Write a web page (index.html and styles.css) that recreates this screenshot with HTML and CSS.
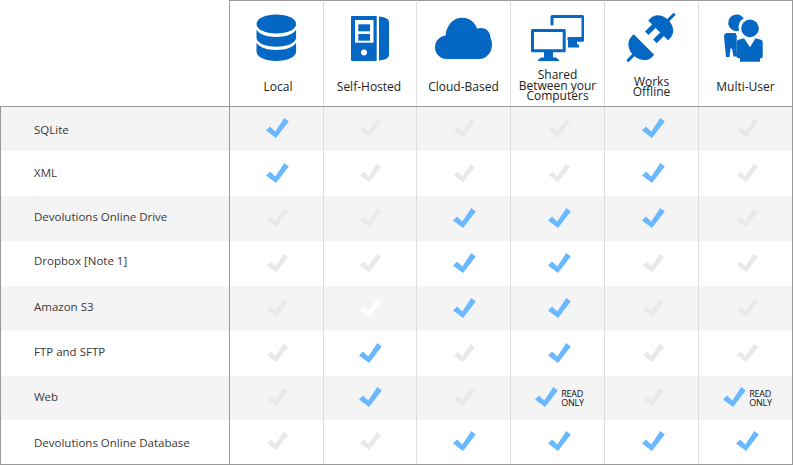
FILE: index.html
```html
<!DOCTYPE html>
<html lang="en">
<head>
<meta charset="utf-8">
<title>Data source comparison</title>
<link rel="stylesheet" href="styles.css">
</head>
<body>
<svg class="sprite" aria-hidden="true"><symbol id="check" viewBox="0 0 23 20"><polygon points="0,12.5 4,8.5 9.3,13.5 18.3,0 22.8,3.5 10,20"/></symbol></svg>
<div class="matrix">
  <div class="row head">
    <div class="name"></div>
    <div class="cell">
      <svg class="icon" viewBox="230 1 93 67"><g class="ink"><path d="M256.500 24c0-5.500 8.800-9.500 19.800-9.500s19.800 4 19.800 9.500-8.800 9.500-19.800 9.500-19.800-4-19.800-9.500z"/><path d="M256.500 29.500c2.500 4.800 10.500 7.500 19.800 7.500s17.300-2.700 19.800-7.500v8.300c0 5-8.800 9-19.800 9s-19.800-4-19.800-9z"/><path d="M256.500 42.500c2.500 4.800 10.500 7.500 19.800 7.500s17.300-2.700 19.800-7.500v9c0 5.400-8.800 9.500-19.800 9.500s-19.800-4.100-19.800-9.500z"/></g></svg>
      <div class="label nudge-right">Local</div>
    </div>
    <div class="cell">
      <svg class="icon" viewBox="324 1 92 67"><path class="ink" d="M352 16h24.700v45H352.500a1.500 1.500 0 0 1-1.500-1.500V17a1 1 0 0 1 1-1zM379 16.500c5 .5 10 2 10 5.500v33c0 3.500-5 5-10 5.500z"/><rect x="355" y="20" width="18.500" height="22.700" fill="#fff"/><rect class="ink" x="358.300" y="24.300" width="11.700" height="7"/><rect class="ink" x="358.300" y="34" width="11.700" height="6.700"/><circle cx="364" cy="52.500" r="3" fill="#fff"/></svg>
      <div class="label nudge-left">Self-Hosted</div>
    </div>
    <div class="cell">
      <svg class="icon" viewBox="417 1 93 67"><path class="ink" d="M447 59c-6.800 0-12-5.200-12-11.800 0-6.200 4.500-11 10.500-11.800 1-10 7.500-17.600 16.500-17.600 7.500 0 13 4.300 15 11 1.200-.5 2.600-.8 4-.8 5.500 0 9 4 9.500 9 0 .4-.100.600-.100.900 1 1.800 1.600 4 1.600 6.500 0 8-5.500 14.600-13 14.600z"/></svg>
      <div class="label">Cloud-Based</div>
    </div>
    <div class="cell">
      <svg class="icon" viewBox="511 1 93 67"><path class="ink" fill-rule="evenodd" d="M551 15h31.500a1.500 1.500 0 0 1 1.500 1.500v23.700a1.500 1.500 0 0 1-1.500 1.500H577v2.800h2v3h-11v-7.300h-.500v-3.200h14V18h-28v7.200h-3v-8.700a1.500 1.500 0 0 1 1.500-1.500z"/><path class="ink" fill-rule="evenodd" d="M532.500 29h31.700a1.500 1.500 0 0 1 1.500 1.500v20.300a1.500 1.500 0 0 1-1.500 1.500H553v5.200h3l3 2.500v1h-21v-1l3-2.500h3v-5.200h-11.500a1.500 1.500 0 0 1-1.500-1.500V30.500a1.500 1.500 0 0 1 1.500-1.500zM534 32v17.300h28.700V32z"/></svg>
      <div class="label three-line">Shared<br>Between your<br>Computers</div>
    </div>
    <div class="cell">
      <svg class="icon" viewBox="605 1 93 67"><g class="ink" transform="translate(651 37.500) rotate(-45)"><path d="M10-14h3c7 0 11 6 11.500 12.500H33.500v3H24.500C24 8 20 14 13 14h-3z"/><rect x="0" y="-8.500" width="11" height="5"/><rect x="0" y="3" width="11" height="5"/><path d="M-10-14.500h-3c-7 0-11.500 6.500-12 13h-8.500v3h8.500c.5 6.500 5 13 12 13h3z"/></g></svg>
      <div class="label">Works<br>Offline</div>
    </div>
    <div class="cell">
      <svg class="icon" viewBox="699 1 93 67"><path class="ink" d="M736.700 14.500a8.300 8.300 0 0 1 7 3.800 10.500 10.500 0 0 0-4.700 12.400 8.300 8.300 0 1 1-2.300-16.200zM727 33h8.500l1.200 2.500v17.500l2.500 3.500h-5.700l-1.500-8h-1.500l-1 8.500h-3.500L724 36.500a3.500 3.500 0 0 1 3-3.500z"/><circle class="ink" cx="750" cy="28.400" r="8.800"/><path class="ink" d="M744 38.300l-5.500 1.500a2.500 2.500 0 0 0-1.800 2.300V57l1.200 1.300h2.100v3.400h20v-3.400h1.200c1.100 0 1.500-.8 1.500-2V42a2.500 2.500 0 0 0-1.800-2.300L755.500 38.300l-5.500 9z"/></svg>
      <div class="label">Multi-User</div>
    </div>
  </div>

  <div class="row band">
    <div class="name">SQLite</div>
    <div class="cell"><svg class="check on"><use href="#check"/></svg></div>
    <div class="cell"><svg class="check off"><use href="#check"/></svg></div>
    <div class="cell"><svg class="check off"><use href="#check"/></svg></div>
    <div class="cell"><svg class="check off"><use href="#check"/></svg></div>
    <div class="cell"><svg class="check on"><use href="#check"/></svg></div>
    <div class="cell"><svg class="check off"><use href="#check"/></svg></div>
  </div>
  <div class="row">
    <div class="name up1">XML</div>
    <div class="cell"><svg class="check on"><use href="#check"/></svg></div>
    <div class="cell"><svg class="check off"><use href="#check"/></svg></div>
    <div class="cell"><svg class="check off"><use href="#check"/></svg></div>
    <div class="cell"><svg class="check off"><use href="#check"/></svg></div>
    <div class="cell"><svg class="check on"><use href="#check"/></svg></div>
    <div class="cell"><svg class="check off"><use href="#check"/></svg></div>
  </div>
  <div class="row band">
    <div class="name up2">Devolutions Online Drive</div>
    <div class="cell"><svg class="check off"><use href="#check"/></svg></div>
    <div class="cell"><svg class="check off"><use href="#check"/></svg></div>
    <div class="cell"><svg class="check on"><use href="#check"/></svg></div>
    <div class="cell"><svg class="check on"><use href="#check"/></svg></div>
    <div class="cell"><svg class="check on"><use href="#check"/></svg></div>
    <div class="cell"><svg class="check off"><use href="#check"/></svg></div>
  </div>
  <div class="row">
    <div class="name up3">Dropbox [Note 1]</div>
    <div class="cell"><svg class="check off"><use href="#check"/></svg></div>
    <div class="cell"><svg class="check off"><use href="#check"/></svg></div>
    <div class="cell"><svg class="check on"><use href="#check"/></svg></div>
    <div class="cell"><svg class="check on"><use href="#check"/></svg></div>
    <div class="cell"><svg class="check off"><use href="#check"/></svg></div>
    <div class="cell"><svg class="check off"><use href="#check"/></svg></div>
  </div>
  <div class="row band">
    <div class="name up2">Amazon S3</div>
    <div class="cell"><svg class="check off"><use href="#check"/></svg></div>
    <div class="cell"><svg class="check blank"><use href="#check"/></svg></div>
    <div class="cell"><svg class="check on"><use href="#check"/></svg></div>
    <div class="cell"><svg class="check on"><use href="#check"/></svg></div>
    <div class="cell"><svg class="check off"><use href="#check"/></svg></div>
    <div class="cell"><svg class="check off"><use href="#check"/></svg></div>
  </div>
  <div class="row">
    <div class="name up2">FTP and SFTP</div>
    <div class="cell"><svg class="check off"><use href="#check"/></svg></div>
    <div class="cell"><svg class="check on"><use href="#check"/></svg></div>
    <div class="cell"><svg class="check off"><use href="#check"/></svg></div>
    <div class="cell"><svg class="check on"><use href="#check"/></svg></div>
    <div class="cell"><svg class="check off"><use href="#check"/></svg></div>
    <div class="cell"><svg class="check off"><use href="#check"/></svg></div>
  </div>
  <div class="row band">
    <div class="name up2">Web</div>
    <div class="cell"><svg class="check off"><use href="#check"/></svg></div>
    <div class="cell"><svg class="check on"><use href="#check"/></svg></div>
    <div class="cell"><svg class="check off"><use href="#check"/></svg></div>
    <div class="cell limited"><svg class="check on"><use href="#check"/></svg><span class="note">READ<br>ONLY</span></div>
    <div class="cell"><svg class="check off"><use href="#check"/></svg></div>
    <div class="cell limited"><svg class="check on"><use href="#check"/></svg><span class="note">READ<br>ONLY</span></div>
  </div>
  <div class="row">
    <div class="name">Devolutions Online Database</div>
    <div class="cell"><svg class="check off"><use href="#check"/></svg></div>
    <div class="cell"><svg class="check off"><use href="#check"/></svg></div>
    <div class="cell"><svg class="check on"><use href="#check"/></svg></div>
    <div class="cell"><svg class="check on"><use href="#check"/></svg></div>
    <div class="cell"><svg class="check on"><use href="#check"/></svg></div>
    <div class="cell"><svg class="check on"><use href="#check"/></svg></div>
  </div>
</div>
</body>
</html>
```
FILE: styles.css
```css
html, body {
  margin: 0;
  padding: 0;
  background: #fff;
  overflow: hidden;
}
.sprite {
  display: block;
  width: 0;
  height: 0;
}
.matrix {
  display: grid;
  width: 793px;
  height: 465px;
  box-sizing: border-box;
  grid-template-rows: 107px 44px 45px 45px 45px 45px 45px 44px 45px;
  font-family: "Open Sans", sans-serif;
  color: #222;
}
.row {
  display: grid;
  grid-template-columns: 230px 94px 93px 94px 94px 94px 94px;
}
.row:last-child {
  border-bottom: 1px solid #999;
}
.band {
  background: #f4f4f4;
}
.head {
  border-bottom: 1px solid #999;
}
.name {
  display: flex;
  align-items: center;
  padding-left: 33px;
  border-left: 1px solid #999;
  border-right: 1px solid #999;
  font-size: 11.500px;
  color: #383838;
}
.up1 {
  padding-bottom: 2px;
}
.up2 {
  padding-bottom: 4px;
}
.up3 {
  padding-bottom: 6px;
}
.head .name {
  border-left: 0;
}
.cell {
  display: flex;
  align-items: center;
  justify-content: center;
  border-right: 1px solid #ddd;
}
.cell:last-child {
  border-right-color: #999;
}
.head .cell {
  flex-direction: column;
  justify-content: flex-start;
  border-top: 1px solid #999;
}
.icon {
  display: block;
  width: 100%;
  height: 67px;
  flex: none;
}
.ink {
  fill: #0467c3;
}
.label {
  flex: 1;
  display: flex;
  align-items: center;
  justify-content: center;
  text-align: center;
  font-size: 12px;
  line-height: 10.500px;
}
.nudge-right {
  padding-left: 3px;
}
.nudge-left {
  padding-right: 2px;
}
.three-line {
  padding-bottom: 2px;
}
.check {
  width: 23px;
  height: 20px;
  margin-top: -2px;
  flex: none;
}
.cell:nth-child(2) .check,
.cell:nth-child(4) .check {
  margin-left: 2px;
}
.cell:nth-child(n+5):not(.limited) .check {
  margin-left: 3px;
}
.on {
  fill: #6ab8ff;
}
.off {
  fill: #e9e9e9;
  transform: scale(0.93);
}
.blank {
  fill: #fff;
  transform: scale(0.93);
}
.limited {
  gap: 3px;
  padding-left: 4px;
}
.note {
  font-size: 9px;
  line-height: 9px;
  letter-spacing: -0.300px;
  color: #111;
}
```
